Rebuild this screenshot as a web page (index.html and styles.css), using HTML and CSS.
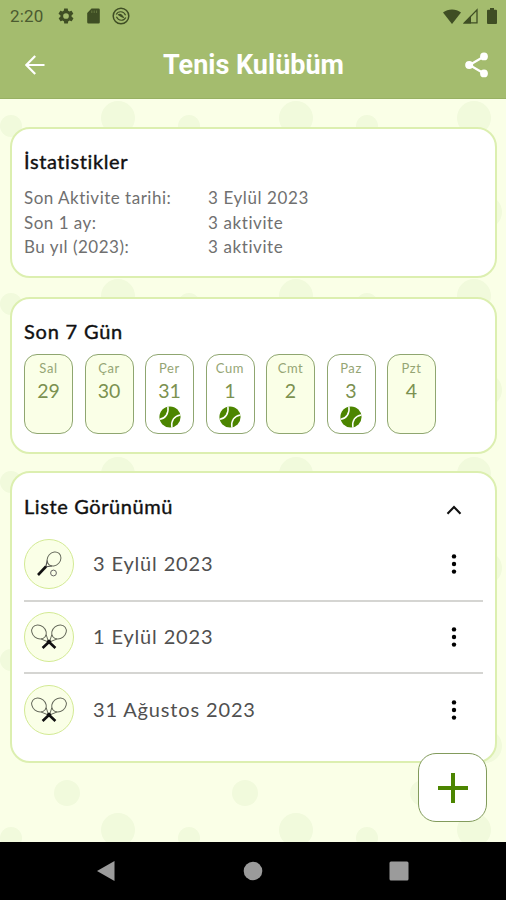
FILE: index.html
```html
<!DOCTYPE html>
<html lang="tr">
<head>
    <meta charset="UTF-8">
    <meta name="viewport" content="width=device-width, initial-scale=1.0">
    <title>Tenis Kulübüm</title>
    <link rel="stylesheet" href="styles.css">
</head>
<body>
    <!-- shared icons -->
    <svg class="defs" width="0" height="0">
        <symbol id="ball" viewBox="0 0 22 22">
            <circle cx="11" cy="11" r="10.6" fill="#4c8500"/>
            <path d="M.8 13.2C6.3 12.6 10 7.5 8.9 .6M12.9 21.4C11.8 14.8 15.4 9.6 21.3 8.9" fill="none" stroke="#fff" stroke-width="1.5"/>
        </symbol>
        <symbol id="racket" viewBox="0 0 48 48">
            <ellipse cx="29" cy="19" rx="6.4" ry="7.6" transform="rotate(42 29 19)" fill="none" stroke="#666a5c" stroke-width="1"/>
            <path d="M22.3 20.5L20.8 26.8L27 26" fill="none" stroke="#555" stroke-width="1.2"/>
            <path d="M21 26.5L13 35" stroke="#111" stroke-width="2.6"/>
            <circle cx="28.5" cy="33" r="2.9" fill="none" stroke="#666" stroke-width="1"/>
        </symbol>
        <symbol id="rackets" viewBox="0 0 48 48">
            <g fill="none" stroke="#666a5c" stroke-width="1">
                <ellipse cx="14" cy="19" rx="6.5" ry="7.8" transform="rotate(-52 14 19)"/>
                <ellipse cx="34" cy="19" rx="6.5" ry="7.8" transform="rotate(52 34 19)"/>
                <path d="M16 26L23.5 29L21.3 22M32 26L24.5 29L26.7 22"/>
            </g>
            <path d="M22.5 27.5L30.4 35M25.5 27.5L17.6 35" stroke="#111" stroke-width="2.6"/>
        </symbol>
        <symbol id="more" viewBox="0 0 6 22">
            <circle cx="3" cy="3.4" r="2.2"/>
            <circle cx="3" cy="11" r="2.2"/>
            <circle cx="3" cy="18.6" r="2.2"/>
        </symbol>
    </svg>

    <div class="screen">
        <div class="status-bar">
            <span class="clock">2:20</span>
            <svg width="18" height="18" viewBox="0 0 24 24"><path d="M19.4 13c0-.3.1-.6.1-1s0-.7-.1-1l2.1-1.6c.2-.2.2-.4.1-.6l-2-3.5c-.1-.2-.4-.3-.6-.2l-2.5 1c-.5-.4-1.1-.7-1.7-1l-.4-2.6c0-.3-.2-.5-.5-.5h-4c-.3 0-.5.2-.5.5l-.4 2.6c-.6.3-1.2.6-1.7 1l-2.5-1c-.2-.1-.5 0-.6.2l-2 3.5c-.1.2-.1.5.1.6L4.6 11c0 .3-.1.7-.1 1s0 .7.1 1l-2.1 1.6c-.2.2-.2.4-.1.6l2 3.5c.1.2.4.3.6.2l2.5-1c.5.4 1.1.7 1.7 1l.4 2.6c0 .3.2.5.5.5h4c.3 0 .5-.2.5-.5l.4-2.6c.6-.3 1.2-.6 1.7-1l2.5 1c.2.1.5 0 .6-.2l2-3.5c.1-.2.1-.5-.1-.6zM12 15.8a3.8 3.8 0 1 1 0-7.6 3.8 3.8 0 0 1 0 7.6z"/></svg>
            <svg class="sd" width="13" height="16" viewBox="0 0 13 16"><path d="M4.5 .5H11.5A1.3 1.3 0 0 1 12.8 1.8V14.2A1.3 1.3 0 0 1 11.5 15.5H1.5A1.3 1.3 0 0 1 .2 14.2V5z"/><path d="M4.8 2.5V5M7.2 2.5V5M9.6 2.5V5" stroke="#65773f" stroke-width="1"/></svg>
            <svg class="sync" width="18" height="18" viewBox="0 0 18 18"><circle cx="9" cy="9" r="7.8" fill="none" stroke="#3f4e24" stroke-width="1.5"/><path d="M4.2 7.5C6 3.8 11.5 3.600 13.600 8.200M13.800 10.500C12 14.200 6.500 14.400 4.400 9.800" fill="none" stroke="#3f4e24" stroke-width="1.2"/><path d="M5.5 7.8C7.5 5.500 10.500 6.500 12.500 11.500L9 10z"/></svg>
            <span class="spacer"></span>
            <svg width="18" height="15" viewBox="0 0 18 15"><path d="M0 3.5C5-.6 13-.6 18 3.5L9 15z"/></svg>
            <svg class="signal" width="15" height="16" viewBox="0 0 15 16"><path d="M14 1.8V14.8H1.5z" fill="none" stroke="#3f4e24" stroke-width="1.3"/><path d="M0 15.5L8 7.5V15.5z"/></svg>
            <svg class="battery" width="10" height="16" viewBox="0 0 10 16"><path d="M3 0H7V1.8H9A1 1 0 0 1 10 2.8V15A1 1 0 0 1 9 16H1A1 1 0 0 1 0 15V2.8A1 1 0 0 1 1 1.8H3z"/></svg>
        </div>

        <header class="app-bar">
            <svg width="20" height="20" viewBox="0 0 20 20"><path d="M19.5 10H1.8M10.2 1L1.3 10L10.2 19" fill="none" stroke="#fff" stroke-width="2.2"/></svg>
            <h1>Tenis Kulübüm</h1>
            <svg width="24" height="26" viewBox="0 0 24 26"><path d="M19 4.5L4.5 13L19 21.5" fill="none" stroke="#fff" stroke-width="2.2"/><circle cx="19" cy="4.4" r="3.9" fill="#fff"/><circle cx="4.2" cy="13" r="4" fill="#fff"/><circle cx="19" cy="21.4" r="3.9" fill="#fff"/></svg>
        </header>

        <main class="content">
            <!-- tennis ball dots behind the cards -->
            <svg class="dots" width="100%" height="100%">
                <pattern id="dot-pattern" width="178" height="178" patternUnits="userSpaceOnUse">
                    <g fill="#f1fadc">
                        <circle cx="118" cy="19" r="17"/>
                        <circle cx="11" cy="27" r="11"/>
                        <circle cx="67" cy="160" r="13"/>
                        <circle cx="129" cy="113" r="17"/>
                    </g>
                </pattern>
                <rect width="100%" height="100%" fill="url(#dot-pattern)"/>
            </svg>

            <section class="card stats">
                <h2>İstatistikler</h2>
                <dl>
                    <dt>Son Aktivite tarihi:</dt>
                    <dd>3 Eylül 2023</dd>
                    <dt>Son 1 ay:</dt>
                    <dd>3 aktivite</dd>
                    <dt>Bu yıl (2023):</dt>
                    <dd>3 aktivite</dd>
                </dl>
            </section>

            <section class="card week">
                <h2>Son 7 Gün</h2>
                <div class="days">
                    <div class="day"><span>Sal</span><b>29</b></div>
                    <div class="day"><span>Çar</span><b>30</b></div>
                    <div class="day active"><span>Per</span><b>31</b><svg><use href="#ball"/></svg></div>
                    <div class="day active"><span>Cum</span><b>1</b><svg><use href="#ball"/></svg></div>
                    <div class="day"><span>Cmt</span><b>2</b></div>
                    <div class="day active"><span>Paz</span><b>3</b><svg><use href="#ball"/></svg></div>
                    <div class="day"><span>Pzt</span><b>4</b></div>
                </div>
            </section>

            <section class="card list">
                <div class="list-head">
                    <h2>Liste Görünümü</h2>
                    <svg width="16" height="10" viewBox="0 0 16 10"><path d="M1.5 8.7L8 2L14.5 8.7" fill="none" stroke="#111" stroke-width="2.1"/></svg>
                </div>
                <ul>
                    <li>
                        <svg class="avatar"><use href="#racket"/></svg>
                        <span>3 Eylül 2023</span>
                        <svg class="more"><use href="#more"/></svg>
                    </li>
                    <li>
                        <svg class="avatar"><use href="#rackets"/></svg>
                        <span>1 Eylül 2023</span>
                        <svg class="more"><use href="#more"/></svg>
                    </li>
                    <li>
                        <svg class="avatar"><use href="#rackets"/></svg>
                        <span>31 Ağustos 2023</span>
                        <svg class="more"><use href="#more"/></svg>
                    </li>
                </ul>
            </section>

            <button class="fab" aria-label="Ekle">
                <svg width="30" height="30" viewBox="0 0 30 30"><path d="M15 0V30M0 15H30" stroke="#4c8500" stroke-width="4"/></svg>
            </button>
        </main>

        <nav class="nav-bar">
            <svg width="20" height="22" viewBox="0 0 20 22"><path d="M1 11L18.5 1V21z"/></svg>
            <svg width="20" height="20" viewBox="0 0 20 20"><circle cx="10" cy="10" r="9.3"/></svg>
            <svg width="20" height="20" viewBox="0 0 20 20"><rect x=".5" y=".5" width="19" height="19" rx="1.5"/></svg>
        </nav>
    </div>
</body>
</html>
```

FILE: styles.css
```css
* {
    margin: 0;
    padding: 0;
    box-sizing: border-box;
}

body {
    font-family: Lato, 'Open Sans', sans-serif;
    background: #000;
    color: #111;
}

svg {
    display: block;
    flex-shrink: 0;
}

.defs {
    position: absolute;
}

.screen {
    display: flex;
    flex-direction: column;
    width: 506px;
    height: 900px;
    overflow: hidden;
}

/* Header */
.status-bar {
    display: flex;
    align-items: center;
    height: 32px;
    padding: 0 9px 0 10px;
    background: #a4bc6e;
    color: #4b5a30;
    fill: #3f4e24;
}

.clock {
    width: 47px;
    font-family: Roboto, sans-serif;
    font-size: 17px;
    letter-spacing: .2px;
}

.sd {
    margin-left: 12px;
}

.sync {
    margin-left: 12px;
}

.spacer {
    flex: 1;
}

.signal {
    margin-left: 2px;
}

.battery {
    margin-left: 9px;
}

.app-bar {
    display: flex;
    align-items: center;
    justify-content: space-between;
    height: 67px;
    padding: 0 17px 0 25px;
    background: #a4bc6e;
    border-bottom: 1px solid #98b163;
}

.app-bar h1 {
    margin-right: 3px;
    font-family: Roboto, sans-serif;
    font-size: 27px;
    font-weight: 700;
    line-height: 32px;
    color: #fff;
}

/* Cards */
.content {
    position: relative;
    flex: 1;
    display: flex;
    flex-direction: column;
    padding: 28px 9px 0 10px;
    background: #faffe7;
}

.dots {
    position: absolute;
    top: 0;
    left: 0;
}

.card {
    position: relative;
    padding: 0 12px;
    background: #fff;
    border: 2px solid #dcefb0;
    border-radius: 20px;
}

h2 {
    font-size: 20px;
    font-weight: 400;
    line-height: 26px;
    letter-spacing: .6px;
    -webkit-text-stroke: .4px #111;
}

.stats {
    height: 151px;
    padding-top: 19px;
}

.stats dl {
    display: grid;
    grid-template-columns: 184px 1fr;
    grid-auto-rows: 24.5px;
    margin-top: 12px;
    font-size: 17px;
    line-height: 24px;
    letter-spacing: .5px;
    color: #707070;
}

.stats dd {
    letter-spacing: .6px;
}

.week {
    height: 157px;
    margin-top: 19px;
    padding-top: 19px;
}

.week h2 {
    letter-spacing: .8px;
}

.days {
    display: flex;
    gap: 11.5px;
    margin-top: 10px;
}

.day {
    display: flex;
    flex-direction: column;
    align-items: center;
    width: 49px;
    height: 80px;
    padding-top: 5px;
    background: #faffe7;
    border: 1.5px solid #8fa670;
    border-radius: 13px;
    color: #7b9150;
}

.day.active {
    background: #fff;
}

.day span {
    font-size: 13px;
    line-height: 16px;
    letter-spacing: .6px;
    color: #95a574;
}

.day b {
    margin-top: 2px;
    font-size: 19.5px;
    font-weight: 400;
    line-height: 26px;
}

.day svg {
    width: 22px;
    height: 22px;
    margin-top: 2px;
}

.list {
    height: 292px;
    margin-top: 17px;
    padding-top: 20px;
}

.list-head {
    display: flex;
    align-items: center;
    justify-content: space-between;
    padding-right: 21px;
}

.list-head svg {
    margin-top: 7px;
}

.list ul {
    margin-top: 10px;
    list-style: none;
}

.list li {
    display: flex;
    align-items: center;
    height: 72.5px;
    border-bottom: 2px solid #d5d5d2;
    font-size: 20px;
    letter-spacing: .85px;
    color: #505050;
}

.list li:last-child {
    border-bottom: 0;
}

.list li span {
    padding-bottom: 2px;
}

.avatar {
    width: 50px;
    height: 50px;
    margin-right: 19px;
    background: #faffe7;
    border: 1.5px solid #d3ea94;
    border-radius: 50%;
}

.more {
    width: 6px;
    height: 22px;
    margin: 0 26px 0 auto;
}

/* Add button */
.fab {
    position: absolute;
    right: 19px;
    bottom: 20px;
    display: flex;
    align-items: center;
    justify-content: center;
    width: 69px;
    height: 69px;
    background: #fff;
    border: 1.5px solid #829b5c;
    border-radius: 18px;
}

/* Android navigation */
.nav-bar {
    display: flex;
    align-items: center;
    justify-content: space-between;
    height: 58px;
    padding: 0 97px 0 96px;
    background: #000;
    fill: #9b9b9b;
}
```
